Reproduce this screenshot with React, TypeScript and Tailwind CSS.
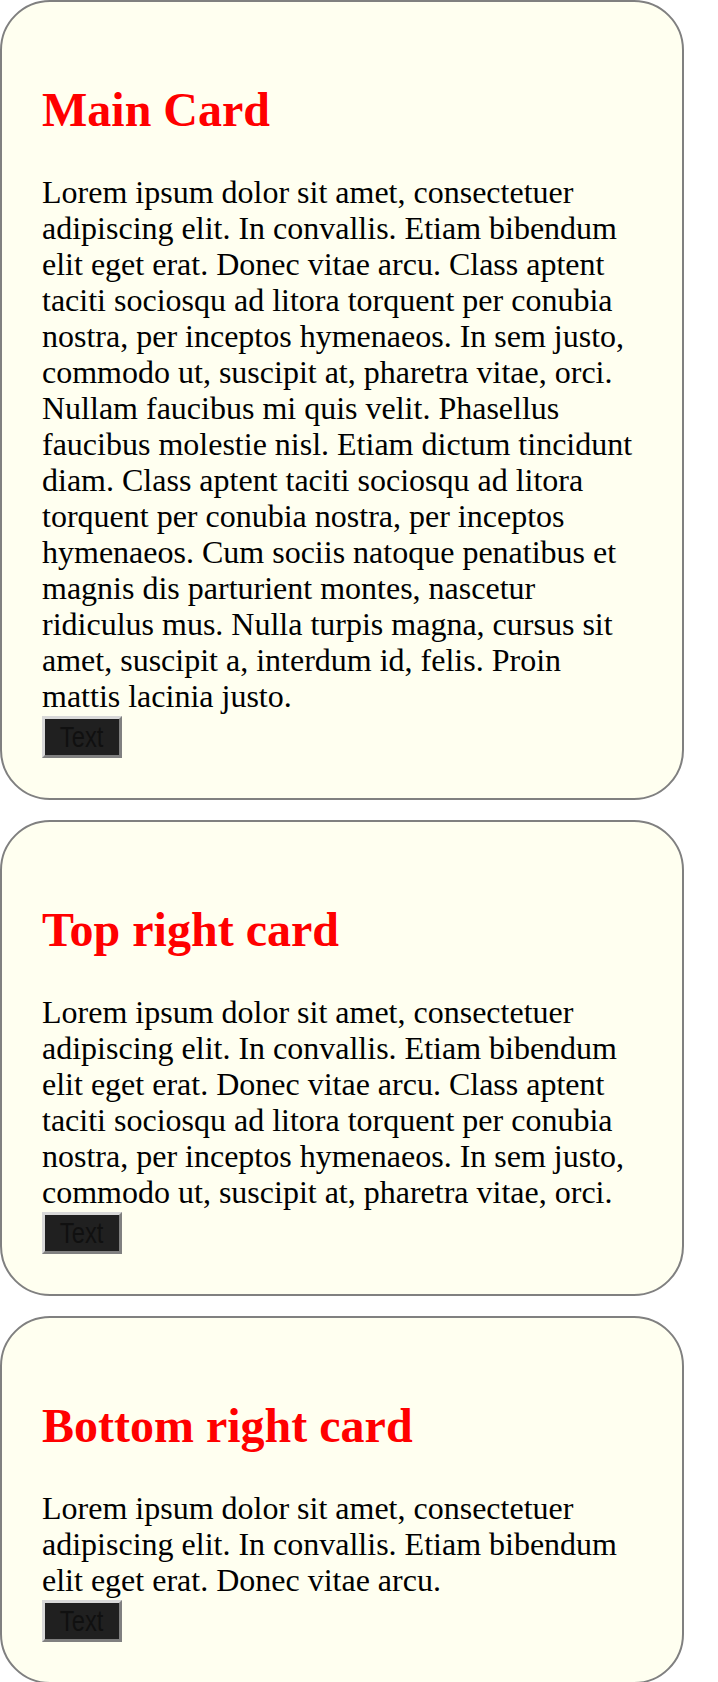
import React from 'react';

const cards = [
    {
        title: 'Main Card',
        body: 'Lorem ipsum dolor sit amet, consectetuer adipiscing elit. In convallis. Etiam bibendum elit eget erat. Donec vitae arcu. Class aptent taciti sociosqu ad litora torquent per conubia nostra, per inceptos hymenaeos. In sem justo, commodo ut, suscipit at, pharetra vitae, orci. Nullam faucibus mi quis velit. Phasellus faucibus molestie nisl. Etiam dictum tincidunt diam. Class aptent taciti sociosqu ad litora torquent per conubia nostra, per inceptos hymenaeos. Cum sociis natoque penatibus et magnis dis parturient montes, nascetur ridiculus mus. Nulla turpis magna, cursus sit amet, suscipit a, interdum id, felis. Proin mattis lacinia justo.',
    },
    {
        title: 'Top right card',
        body: 'Lorem ipsum dolor sit amet, consectetuer adipiscing elit. In convallis. Etiam bibendum elit eget erat. Donec vitae arcu. Class aptent taciti sociosqu ad litora torquent per conubia nostra, per inceptos hymenaeos. In sem justo, commodo ut, suscipit at, pharetra vitae, orci.',
    },
    {
        title: 'Bottom right card',
        body: 'Lorem ipsum dolor sit amet, consectetuer adipiscing elit. In convallis. Etiam bibendum elit eget erat. Donec vitae arcu.',
    },
];

const Card: React.FC<{ title: string; body: string }> = ({ title, body }) => (
    <div className="w-[684px] mb-[20px] last:mb-0 rounded-[50px] border-2 border-[#808080] bg-[#fffff0] px-[40px] pt-[40px] pb-[40px]">
        <h2 className="mt-[40px] mb-[37px] text-[48px] leading-[55px] font-bold text-[#ff0000]">
            {title}
        </h2>
        <p className="text-[32px] leading-[36px] text-black">{body}</p>
        {/* old-school outset button, narrow label */}
        <button className="mt-[2px] flex items-center justify-center w-[80px] h-[42px] pt-[1px] border-[3px] border-t-[#d8d8d8] border-l-[#d8d8d8] border-b-[#808080] border-r-[#808080] bg-[#202020] text-[#101010] text-[29px] leading-none font-['Liberation_Sans',Arial,sans-serif]">
            <span className="inline-block scale-x-[0.82]">Text</span>
        </button>
    </div>
);

export default function App() {
    return (
        <div className="bg-white font-['Liberation_Serif','Times_New_Roman',serif]">
            {cards.map((c) => (
                <Card key={c.title} title={c.title} body={c.body} />
            ))}
        </div>
    );
}
